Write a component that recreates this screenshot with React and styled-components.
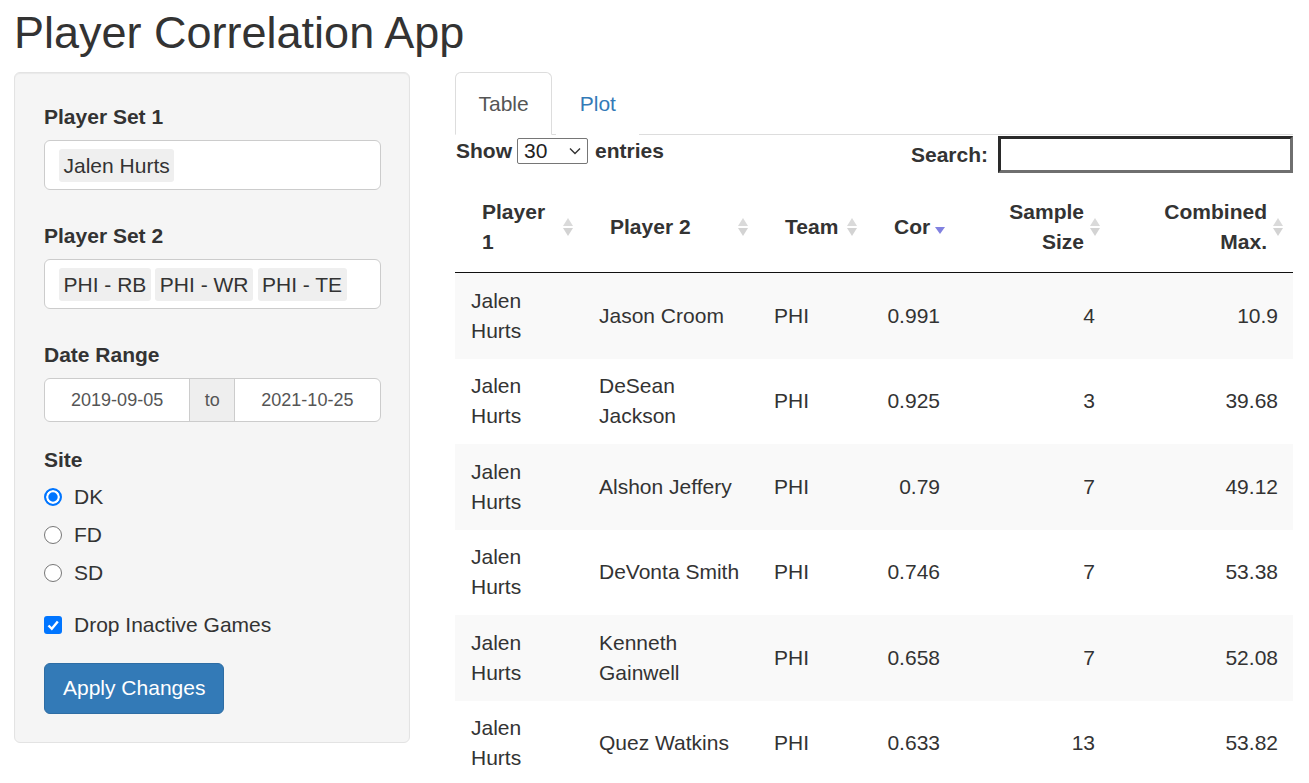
import styled, { createGlobalStyle } from "styled-components";

const GlobalStyle = createGlobalStyle`
  html, body {
    margin: 0;
    overflow: hidden;
  }
  body {
    font-family: "Liberation Sans", Arial, Helvetica, sans-serif;
    font-size: 21px;
    line-height: 30px;
    color: #333;
    background: #fff;
  }
  * {
    box-sizing: border-box;
  }
`;

const rows = [
  ["Jalen Hurts", "Jason Croom", "PHI", "0.991", "4", "10.9"],
  ["Jalen Hurts", "DeSean Jackson", "PHI", "0.925", "3", "39.68"],
  ["Jalen Hurts", "Alshon Jeffery", "PHI", "0.79", "7", "49.12"],
  ["Jalen Hurts", "DeVonta Smith", "PHI", "0.746", "7", "53.38"],
  ["Jalen Hurts", "Kenneth Gainwell", "PHI", "0.658", "7", "52.08"],
  ["Jalen Hurts", "Quez Watkins", "PHI", "0.633", "13", "53.82"],
];

const columns = [
  { title: "Player 1", width: 128 },
  { title: "Player 2", width: 175 },
  { title: "Team", width: 109 },
  { title: "Cor", width: 88, right: true, sorted: true },
  { title: "Sample Size", width: 155, right: true },
  { title: "Combined Max.", width: 183, right: true },
];

const SortIcon = ({ active }) =>
  active ? (
    <SortMark width="12" height="20" viewBox="0 0 12 20">
      <polygon points="1,10 11,10 6,17" fill="#8181e0" />
    </SortMark>
  ) : (
    <SortMark width="12" height="20" viewBox="0 0 12 20">
      <polygon points="1,9 6,1 11,9" fill="#dadada" />
      <polygon points="1,11 11,11 6,19" fill="#d3d3d3" />
    </SortMark>
  );

const App = () => {
  return (
    <Page>
      <GlobalStyle />
      <Title>Player Correlation App</Title>
      <Layout>
        <Sidebar>
          <FormGroup $gap={31}>
            <Label>Player Set 1</Label>
            <TagInput>
              <Tag>Jalen Hurts</Tag>
            </TagInput>
          </FormGroup>
          <FormGroup $gap={31}>
            <Label>Player Set 2</Label>
            <TagInput>
              <Tag>PHI - RB</Tag>
              <Tag>PHI - WR</Tag>
              <Tag>PHI - TE</Tag>
            </TagInput>
          </FormGroup>
          <FormGroup $gap={23}>
            <Label>Date Range</Label>
            <DateGroup>
              <DateField>2019-09-05</DateField>
              <DateAddon>to</DateAddon>
              <DateField>2021-10-25</DateField>
            </DateGroup>
          </FormGroup>
          <FormGroup $gap={22}>
            <Label>Site</Label>
            <RadioList>
              {["DK", "FD", "SD"].map((site, i) => (
                <Choice key={site}>
                  <RadioDot $checked={i === 0} />
                  {site}
                </Choice>
              ))}
            </RadioList>
          </FormGroup>
          <FormGroup $gap={23}>
            <Choice>
              <CheckBox>
                <svg width="14" height="14" viewBox="0 0 14 14">
                  <polyline
                    points="2.5,7.5 5.8,10.8 11.8,3.5"
                    fill="none"
                    stroke="#fff"
                    strokeWidth="2.4"
                  />
                </svg>
              </CheckBox>
              Drop Inactive Games
            </Choice>
          </FormGroup>
          <ApplyButton>Apply Changes</ApplyButton>
        </Sidebar>

        <Main>
          <Tabs>
            <TabItem $active>Table</TabItem>
            <TabItem>Plot</TabItem>
          </Tabs>
          <Controls>
            <Length>
              Show
              <FakeSelect>
                30
                <svg width="12" height="8" viewBox="0 0 12 8">
                  <path d="M1 1.5l5 5 5-5" fill="none" stroke="#333" strokeWidth="1.4" />
                </svg>
              </FakeSelect>
              entries
            </Length>
            <Filter>
              Search:
              <SearchBox />
            </Filter>
          </Controls>
          <DataTable>
            <colgroup>
              {columns.map((c) => (
                <col key={c.title} style={{ width: c.width }} />
              ))}
            </colgroup>
            <thead>
              <tr>
                {columns.map((c) => (
                  <HeadCell key={c.title} $right={c.right}>
                    {c.title}
                    <SortIcon active={c.sorted} />
                  </HeadCell>
                ))}
              </tr>
            </thead>
            <tbody>
              {rows.map((r, i) => (
                <BodyRow key={i} $odd={i % 2 === 0}>
                  {r.map((v, j) => (
                    <Cell key={j} $right={columns[j].right}>
                      {v}
                    </Cell>
                  ))}
                </BodyRow>
              ))}
            </tbody>
          </DataTable>
        </Main>
      </Layout>
    </Page>
  );
};

export default App;

const Page = styled.div`
  padding: 0 16px 0 14px;
`;

const Title = styled.h2`
  margin: 8px 0 14.5px;
  font-size: 45px;
  line-height: 49.5px;
  font-weight: 400;
  color: #333;
`;

const Layout = styled.div`
  display: grid;
  grid-template-columns: 396px 838px;
  column-gap: 45px;
  align-items: start;
`;

const Sidebar = styled.div`
  background: #f5f5f5;
  border: 1px solid #e3e3e3;
  border-radius: 6px;
  box-shadow: inset 0 1px 1px rgba(0, 0, 0, 0.05);
  padding: 28.5px 28.5px 28.5px 29px;
`;

const FormGroup = styled.div`
  margin-bottom: ${(p) => p.$gap}px;
`;

const Label = styled.div`
  font-weight: bold;
  margin-bottom: 8px;
`;

const TagInput = styled.div`
  display: flex;
  gap: 4.5px;
  height: 50px;
  padding: 8px 14px;
  background: #fff;
  border: 1px solid #ccc;
  border-radius: 6px;
`;

const Tag = styled.span`
  height: 33px;
  line-height: 33px;
  padding: 0 4.5px;
  background: #efefef;
  border-radius: 3px;
  color: #333;
`;

const DateGroup = styled.div`
  display: grid;
  grid-template-columns: 1fr 46px 1fr;
  height: 44px;
  border: 1px solid #ccc;
  border-radius: 6px;
  overflow: hidden;
  background: #fff;
  font-size: 18px;
  color: #555;
`;

const DateField = styled.div`
  display: flex;
  align-items: center;
  justify-content: center;
`;

const DateAddon = styled(DateField)`
  background: #eee;
  border-left: 1px solid #ccc;
  border-right: 1px solid #ccc;
`;

const RadioList = styled.div`
  display: flex;
  flex-direction: column;
  gap: 8px;
  margin-top: -1px;
`;

const Choice = styled.div`
  display: flex;
  align-items: center;
  gap: 12px;
`;

const RadioDot = styled.span`
  width: 18px;
  height: 18px;
  border-radius: 50%;
  border: ${(p) => (p.$checked ? "2px solid #0075ff" : "1px solid #767676")};
  background: ${(p) => (p.$checked ? "#0075ff" : "#fff")};
  box-shadow: ${(p) => (p.$checked ? "inset 0 0 0 2.3px #fff" : "none")};
`;

const CheckBox = styled.span`
  display: flex;
  align-items: center;
  justify-content: center;
  width: 18px;
  height: 18px;
  border-radius: 3px;
  background: #0075ff;
`;

const ApplyButton = styled.button`
  display: block;
  padding: 9.5px 18px;
  font-family: inherit;
  font-size: 21px;
  line-height: 30px;
  color: #fff;
  background: #337ab7;
  border: 1px solid #2e6da4;
  border-radius: 6px;
  cursor: pointer;
`;

const Main = styled.div`
  min-width: 0;
`;

const Tabs = styled.div`
  display: flex;
  border-bottom: 1px solid #ddd;
`;

const TabItem = styled.div`
  padding: 15.5px 22.5px;
  margin-right: 4px;
  margin-bottom: -1px;
  border: 1px solid ${(p) => (p.$active ? "#ddd" : "transparent")};
  border-bottom-color: transparent;
  border-radius: 6px 6px 0 0;
  background: #fff;
  color: ${(p) => (p.$active ? "#555" : "#337ab7")};
`;

const Controls = styled.div`
  display: flex;
  justify-content: space-between;
  align-items: flex-start;
  font-weight: bold;
`;

const Length = styled.div`
  display: flex;
  align-items: center;
  margin-top: 1px;
  padding-left: 1px;
`;

const FakeSelect = styled.span`
  display: flex;
  align-items: center;
  justify-content: space-between;
  width: 71px;
  height: 26px;
  margin: 0 7px 0 5px;
  padding: 0 6px 0 6px;
  border: 1px solid #767676;
  border-radius: 2px;
  background: #fff;
  font-weight: normal;
  color: #222;
`;

const Filter = styled.div`
  display: flex;
  align-items: center;
  margin-top: 1px;
`;

const SearchBox = styled.div`
  width: 295px;
  height: 37px;
  margin-left: 10px;
  background: #fff;
  border-style: solid;
  border-width: 3px;
  border-color: #2a2a2a #6f6f6f #6f6f6f #2a2a2a;
`;

const DataTable = styled.table`
  width: 838px;
  margin-top: 9px;
  border-collapse: collapse;
  table-layout: fixed;
`;

const HeadCell = styled.th`
  position: relative;
  padding: 15px 26px 15px 27px;
  border-bottom: 1px solid #111;
  text-align: ${(p) => (p.$right ? "right" : "left")};
  vertical-align: middle;
  font-weight: bold;
`;

const SortMark = styled.svg`
  position: absolute;
  right: 9px;
  top: 50%;
  margin-top: -10px;
`;

const BodyRow = styled.tr`
  background: ${(p) => (p.$odd ? "#f9f9f9" : "#fff")};
  & + & td {
    border-top: 1px solid #ddd;
  }
`;

const Cell = styled.td`
  padding: 12.75px 15px 12.75px 16px;
  text-align: ${(p) => (p.$right ? "right" : "left")};
  vertical-align: middle;
`;
